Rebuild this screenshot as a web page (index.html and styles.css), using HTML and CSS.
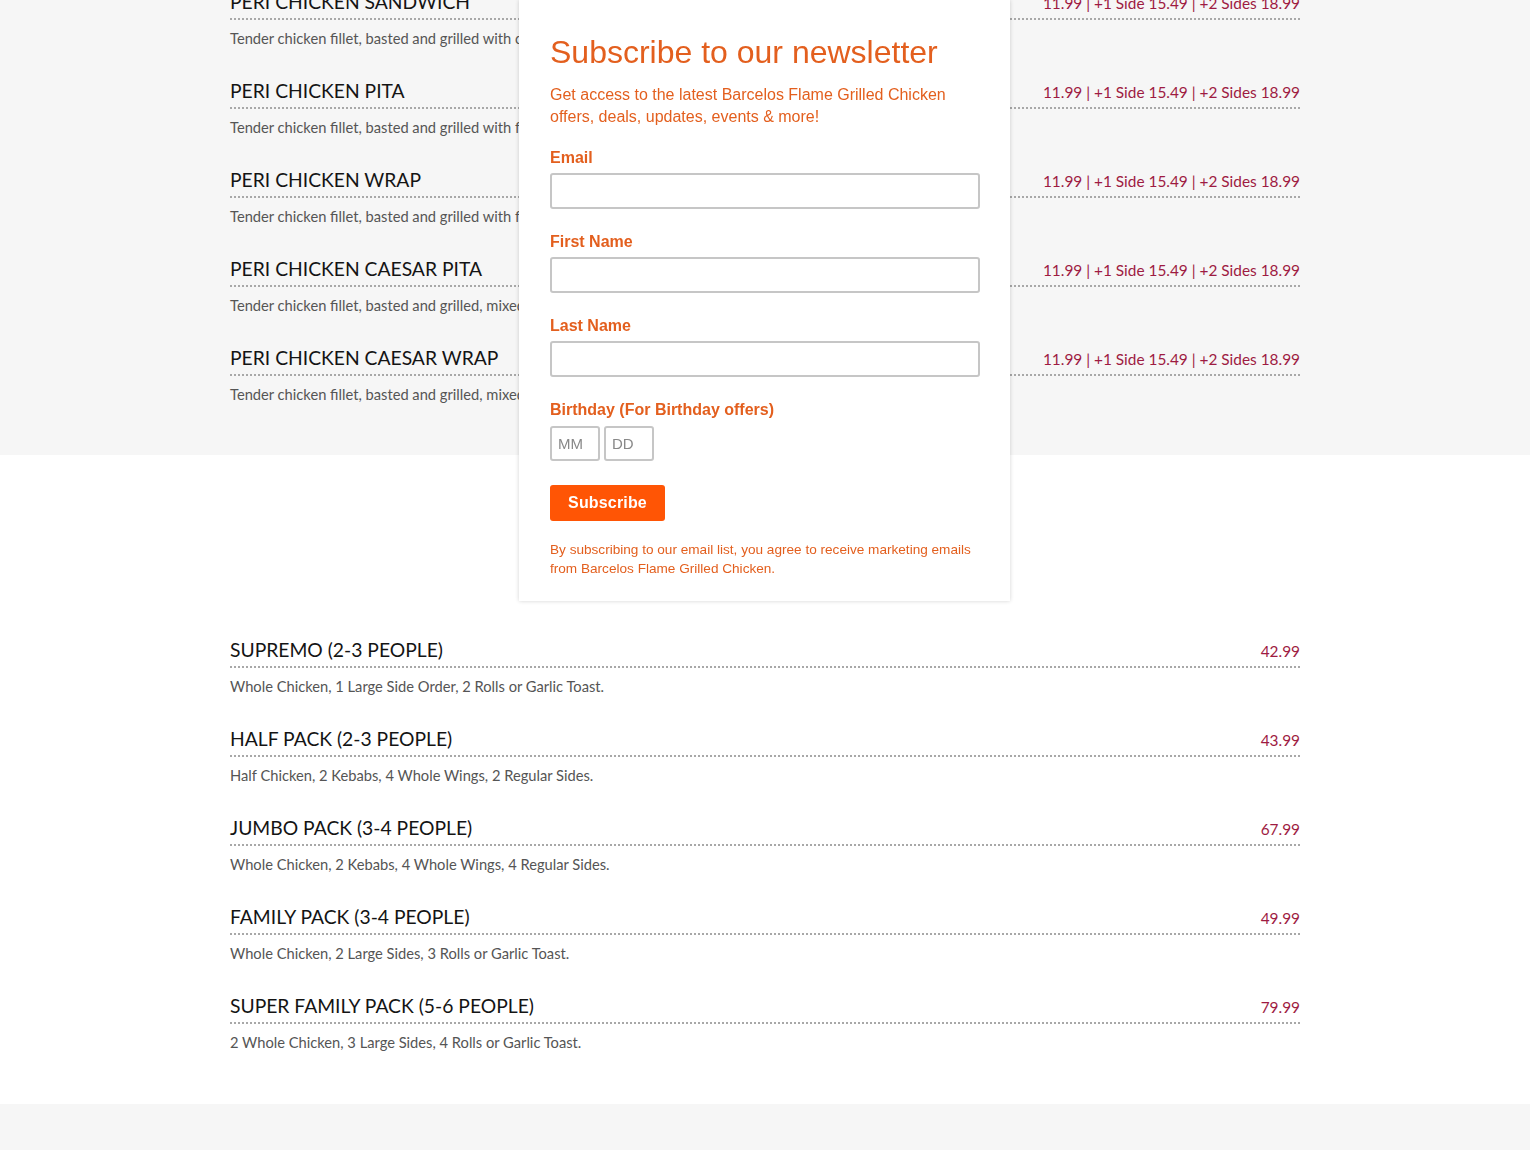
FILE: index.html
```html
<!DOCTYPE html>
<html lang="en">
<head>
  <meta charset="UTF-8">
  <meta name="viewport" content="width=device-width, initial-scale=1.0">
  <title>Barcelos Menu</title>
  <link rel="stylesheet" href="styles.css">
</head>
<body>
  <div class="menu-section gray">
    <div class="menu-list first">
      <div class="item">
        <div class="item-head"><h3>PERI CHICKEN SANDWICH</h3><span class="price">11.99 | +1 Side 15.49 | +2 Sides 18.99</span></div>
        <p class="desc">Tender chicken fillet, basted and grilled with crispy lettuce, tomato and peri mayo on a toasted bun.</p>
      </div>
      <div class="item">
        <div class="item-head"><h3>PERI CHICKEN PITA</h3><span class="price">11.99 | +1 Side 15.49 | +2 Sides 18.99</span></div>
        <p class="desc">Tender chicken fillet, basted and grilled with fresh lettuce, tomato and peri mayo in a warm pita.</p>
      </div>
      <div class="item">
        <div class="item-head"><h3>PERI CHICKEN WRAP</h3><span class="price">11.99 | +1 Side 15.49 | +2 Sides 18.99</span></div>
        <p class="desc">Tender chicken fillet, basted and grilled with fresh lettuce, tomato and peri mayo in a soft tortilla.</p>
      </div>
      <div class="item">
        <div class="item-head"><h3>PERI CHICKEN CAESAR PITA</h3><span class="price">11.99 | +1 Side 15.49 | +2 Sides 18.99</span></div>
        <p class="desc">Tender chicken fillet, basted and grilled, mixed with romaine, parmesan and caesar dressing in a pita.</p>
      </div>
      <div class="item">
        <div class="item-head"><h3>PERI CHICKEN CAESAR WRAP</h3><span class="price">11.99 | +1 Side 15.49 | +2 Sides 18.99</span></div>
        <p class="desc">Tender chicken fillet, basted and grilled, mixed with romaine, parmesan and caesar dressing in a wrap.</p>
      </div>
    </div>
  </div>

  <div class="menu-section white">
    <div class="menu-list">
      <div class="item">
        <div class="item-head"><h3>SUPREMO (2-3 PEOPLE)</h3><span class="price">42.99</span></div>
        <p class="desc">Whole Chicken, 1 Large Side Order, 2 Rolls or Garlic Toast.</p>
      </div>
      <div class="item">
        <div class="item-head"><h3>HALF PACK (2-3 PEOPLE)</h3><span class="price">43.99</span></div>
        <p class="desc">Half Chicken, 2 Kebabs, 4 Whole Wings, 2 Regular Sides.</p>
      </div>
      <div class="item">
        <div class="item-head"><h3>JUMBO PACK (3-4 PEOPLE)</h3><span class="price">67.99</span></div>
        <p class="desc">Whole Chicken, 2 Kebabs, 4 Whole Wings, 4 Regular Sides.</p>
      </div>
      <div class="item">
        <div class="item-head"><h3>FAMILY PACK (3-4 PEOPLE)</h3><span class="price">49.99</span></div>
        <p class="desc">Whole Chicken, 2 Large Sides, 3 Rolls or Garlic Toast.</p>
      </div>
      <div class="item">
        <div class="item-head"><h3>SUPER FAMILY PACK (5-6 PEOPLE)</h3><span class="price">79.99</span></div>
        <p class="desc">2 Whole Chicken, 3 Large Sides, 4 Rolls or Garlic Toast.</p>
      </div>
    </div>
  </div>

  <div class="footer"></div>

  <!-- Newsletter popup -->
  <div class="newsletter">
    <h2>Subscribe to our newsletter</h2>
    <p class="intro">Get access to the latest Barcelos Flame Grilled Chicken offers, deals, updates, events &amp; more!</p>
    <div class="field">
      <label for="nl-email">Email</label>
      <input type="email" id="nl-email">
    </div>
    <div class="field">
      <label for="nl-first">First Name</label>
      <input type="text" id="nl-first">
    </div>
    <div class="field">
      <label for="nl-last">Last Name</label>
      <input type="text" id="nl-last">
    </div>
    <div class="field">
      <label for="nl-mm">Birthday (For Birthday offers)</label>
      <div class="birthday">
        <input type="text" id="nl-mm" placeholder="MM">
        <input type="text" id="nl-dd" placeholder="DD">
      </div>
    </div>
    <button class="subscribe">Subscribe</button>
    <p class="disclaimer">By subscribing to our email list, you agree to receive marketing emails from Barcelos Flame Grilled Chicken.</p>
  </div>
</body>
</html>
```

FILE: styles.css
```css
* {
  margin: 0;
  padding: 0;
  box-sizing: border-box;
}

:root {
  --gray-bg: #f6f6f6;
  --title: #141414;
  --desc: #555555;
  --price: #9e1b42;
  --dots: #a8a8a8;
  --orange: #e35f1e;
  --button: #ff5505;
}

body {
  font-family: 'Lato', sans-serif;
  background-color: #ffffff;
  overflow: hidden;
}

.menu-section.gray {
  background-color: var(--gray-bg);
  padding-bottom: 51px;
}

.menu-section.white {
  background-color: #ffffff;
  padding-top: 183px;
  padding-bottom: 52px;
}

.menu-list {
  width: 1070px;
  margin: 0 auto;
}

.menu-list.first {
  margin-top: -10px;
}

.item + .item {
  margin-top: 31px;
}

.item-head {
  display: flex;
  justify-content: space-between;
  align-items: baseline;
  border-bottom: 2px dotted var(--dots);
  padding-bottom: 3px;
}

.item-head h3 {
  font-size: 19.3px;
  font-weight: 400;
  line-height: 23px;
  padding-bottom: 2px;
  color: var(--title);
}

.price {
  font-size: 15.4px;
  color: var(--price);
}

.desc {
  margin-top: 8px;
  font-size: 14.7px;
  line-height: 20px;
  color: var(--desc);
}

.footer {
  background-color: var(--gray-bg);
  height: 60px;
}

.newsletter {
  position: fixed;
  top: 0;
  left: calc(50% - 246px);
  width: 491px;
  padding: 33px 30px 23px 31px;
  background-color: #ffffff;
  box-shadow: 0 0 4px rgba(0, 0, 0, 0.18);
  font-family: 'Liberation Sans', Arial, sans-serif;
  color: var(--orange);
}

.newsletter h2 {
  font-size: 32px;
  font-weight: 400;
  line-height: 38px;
}

.intro {
  margin-top: 13px;
  font-size: 16px;
  line-height: 22px;
}

.field {
  margin-top: 20px;
}

.field + .field {
  margin-top: 23px;
}

.field label {
  display: block;
  font-size: 16px;
  font-weight: bold;
  line-height: 20px;
  margin-bottom: 5px;
}

.field input {
  display: block;
  width: 100%;
  height: 36px;
  border: 2px solid #c6c6c6;
  border-radius: 3px;
  background-color: #ffffff;
  font-family: 'Liberation Sans', Arial, sans-serif;
  font-size: 15px;
  padding: 0 6px;
}

.birthday {
  display: flex;
  gap: 4px;
  margin-top: 6px;
}

.birthday input {
  width: 50px;
  height: 35px;
}

.birthday input::placeholder {
  color: #888888;
}

.subscribe {
  display: block;
  margin-top: 24px;
  width: 115px;
  height: 36px;
  border: none;
  border-radius: 3px;
  background-color: var(--button);
  color: #ffffff;
  font-family: 'Liberation Sans', Arial, sans-serif;
  font-size: 16px;
  font-weight: bold;
  letter-spacing: 0.01em;
  cursor: pointer;
}

.disclaimer {
  margin-top: 19px;
  font-size: 13.6px;
  line-height: 19px;
}
```
